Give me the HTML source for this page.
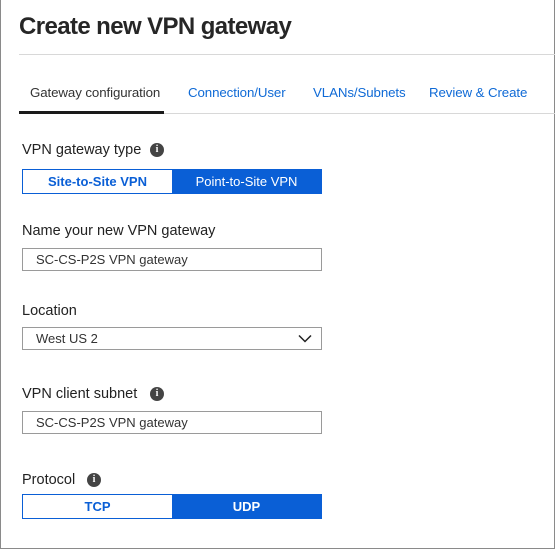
<!DOCTYPE html>
<html><head><style>
*{margin:0;padding:0;box-sizing:border-box}
body{width:555px;height:550px;background:#fff;font-family:"Liberation Sans",sans-serif;position:relative;overflow:hidden;color:#222}
.frame{position:absolute;left:0;top:0;width:555px;height:549px;border:1px solid #8a8a8a;border-top:none}
.a{position:absolute;white-space:nowrap}
h1{position:absolute;left:19px;top:13px;font-size:24px;font-weight:bold;color:#262626;letter-spacing:-0.6px}
.hl{position:absolute;left:19px;top:54px;width:536px;height:1px;background:#d8d8d8}
.tab{position:absolute;top:85px;font-size:13.3px;color:#0f6ad6;letter-spacing:-0.1px}
.lbl{position:absolute;left:22px;font-size:14.5px;color:#222;line-height:18px}
.info{position:absolute;top:2px;width:14px;height:14px;border-radius:50%;background:#444;color:#fff;font-size:10px;font-weight:bold;text-align:center;line-height:14px;font-family:"Liberation Serif",serif}
.tg{position:absolute;left:22px;width:300px;height:25px;border:1px solid #0a5fd6;display:flex;font-size:13px;font-weight:bold}
.tg div{flex:1;text-align:center;line-height:23px}
.off{color:#0a5fd6;background:#fff}
.on{color:#fff;background:#0a5fd6;font-weight:normal}
.inp{position:absolute;left:22px;width:300px;height:23px;border:1px solid #9a9a9a;font-size:13px;padding-left:13px;line-height:21px;color:#333}
</style></head><body>
<div class="frame"></div>
<h1>Create new VPN gateway</h1>
<div class="hl"></div>
<div class="tab" style="left:30px;color:#333">Gateway configuration</div>
<div class="tab" style="left:188px">Connection/User</div>
<div class="tab" style="left:313px">VLANs/Subnets</div>
<div class="tab" style="left:429px">Review &amp; Create</div>
<div class="a" style="left:19px;top:113px;width:536px;height:1px;background:#d8d8d8"></div>
<div class="a" style="left:19px;top:111px;width:145px;height:3px;background:#1a1a1a"></div>

<div class="lbl" style="top:141px;width:200px">VPN gateway type<span class="info" style="left:128px">i</span></div>
<div class="tg" style="top:169px"><div class="off">Site-to-Site VPN</div><div class="on">Point-to-Site VPN</div></div>

<div class="lbl" style="top:222px">Name your new VPN gateway</div>
<div class="inp" style="top:248px">SC-CS-P2S VPN gateway</div>

<div class="lbl" style="top:302px">Location</div>
<div class="inp" style="top:327px">West US 2
<svg style="position:absolute;right:9px;top:6px" width="14" height="9" viewBox="0 0 14 9"><path d="M1 1.5L7 7.5L13 1.5" fill="none" stroke="#222" stroke-width="1.5"/></svg></div>

<div class="lbl" style="top:385px;width:200px">VPN client subnet<span class="info" style="left:128px">i</span></div>
<div class="inp" style="top:411px">SC-CS-P2S VPN gateway</div>

<div class="lbl" style="top:471px;width:200px">Protocol<span class="info" style="left:65px">i</span></div>
<div class="tg" style="top:494px"><div class="off">TCP</div><div class="on" style="font-weight:bold">UDP</div></div>
</body></html>
